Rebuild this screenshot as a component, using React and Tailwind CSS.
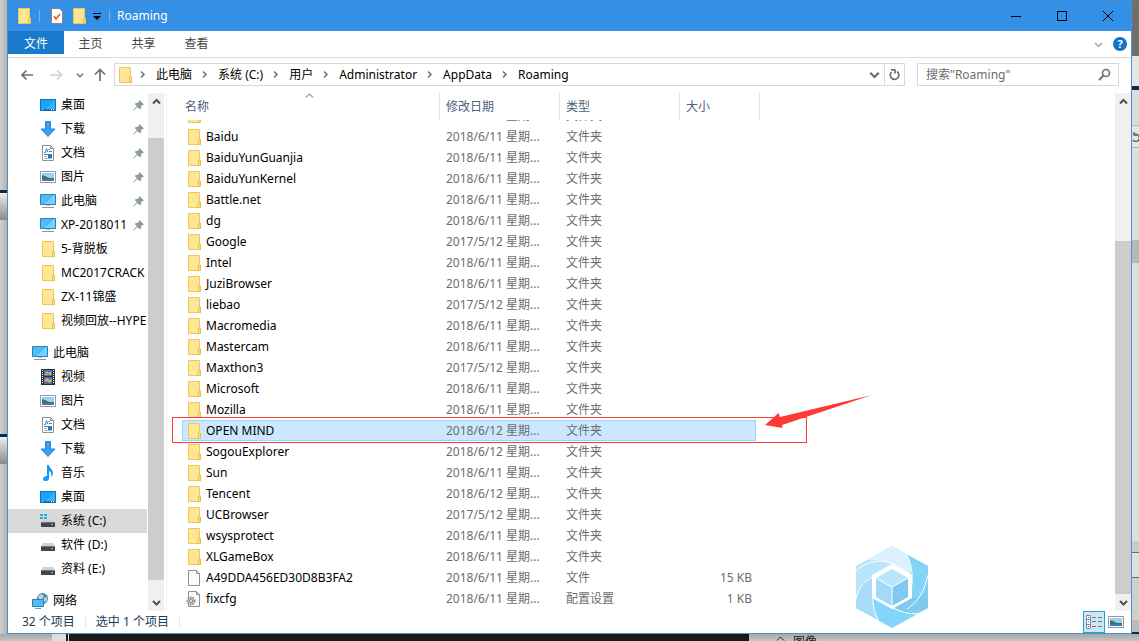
import React from "react";

const files = [
  ["Baidu", "2018/6/11"],
  ["BaiduYunGuanjia", "2018/6/11"],
  ["BaiduYunKernel", "2018/6/11"],
  ["Battle.net", "2018/6/11"],
  ["dg", "2018/6/11"],
  ["Google", "2017/5/12"],
  ["Intel", "2018/6/11"],
  ["JuziBrowser", "2018/6/11"],
  ["liebao", "2017/5/12"],
  ["Macromedia", "2018/6/11"],
  ["Mastercam", "2018/6/11"],
  ["Maxthon3", "2017/5/12"],
  ["Microsoft", "2018/6/11"],
  ["Mozilla", "2018/6/11"],
  ["OPEN MIND", "2018/6/12"],
  ["SogouExplorer", "2018/6/12"],
  ["Sun", "2018/6/11"],
  ["Tencent", "2018/6/12"],
  ["UCBrowser", "2017/5/12"],
  ["wsysprotect", "2018/6/11"],
  ["XLGameBox", "2018/6/11"],
  ["A49DDA456ED30D8B3FA2", "2018/6/11", "文件", "15 KB"],
  ["fixcfg", "2018/6/11", "配置设置", "1 KB"],
];

const quickAccess = [
  ["desktop", "桌面", true],
  ["download", "下载", true],
  ["document", "文档", true],
  ["picture", "图片", true],
  ["computer", "此电脑", true],
  ["computer", "XP-2018011", true],
  ["folder", "5-背脱板"],
  ["folder", "MC2017CRACK"],
  ["folder", "ZX-11锦盛"],
  ["folder", "视频回放--HYPE"],
];

const thisPc = [
  ["video", "视频"],
  ["picture", "图片"],
  ["document", "文档"],
  ["download", "下载"],
  ["music", "音乐"],
  ["desktop", "桌面"],
  ["system", "系统 (C:)"],
  ["drive", "软件 (D:)"],
  ["drive", "资料 (E:)"],
];

function Icon({ kind }) {
  return (
    <svg width="16" height="16" viewBox="0 0 16 16" className="shrink-0" aria-hidden="true">
      {kind === "folder" && (
        <>
          <path d="M2.5 .5h11v9.5l1 1v4.5h-12z" fill="#ffe694" stroke="#edc956" />
          <path d="M12.5 15.500v-5.500h2v5.500z" fill="#ffe08a" stroke="#e8bf48" />
        </>
      )}
      {kind === "desktop" && (
        <>
          <path d="M0 2h16v12H0z" fill="#0c75bd" />
          <path d="M1 3h14v9H1z" fill="#1ea3fb" />
          <path d="M6 12 15 3v9z" fill="#3bb2ff" />
          <path d="M2 12.500h1M11 12.500h1M13 12.500h1" stroke="#fff" />
        </>
      )}
      {kind === "download" && <path d="M5.500 .5h5v7.500h4.500L8 15.500 1 8h4.500z" fill="#3f9bec" stroke="#2b82d0" />}
      {kind === "document" && (
        <>
          <path d="M2.500 .5h8l3 3v12h-11z" fill="#fff" stroke="#909090" />
          <path d="M10.500 .5v3h3" fill="none" stroke="#909090" />
          <path d="M4 7.500h1.500L6.500 3.500 8 7.500M8.500 4.500h1.500M9 6.500h3M4 9.500h8" fill="none" stroke="#2589d6" />
          <path d="M4 11.500h3M4 13.500h8" stroke="#8ab8dd" />
          <path d="M8 10h4v3H8z" fill="#39759e" />
        </>
      )}
      {kind === "picture" && (
        <>
          <path d="M.5 2.500h15v11H.5z" fill="#fff" stroke="#989898" />
          <path d="M2 4h12v8H2z" fill="#9fcdf0" />
          <path d="M2 6l3 1 4 2h5v3H2z" fill="#3d7568" />
          <path d="M2 10h12v2H2z" fill="#3e7caf" />
        </>
      )}
      {kind === "computer" && (
        <>
          <path d="M.5 1.500h15v10H.5z" fill="#4bbcff" stroke="#347ca8" />
          <path d="M5 11 14 2h1v9z" fill="#79cfff" />
          <path d="M6 12.500h4" stroke="#bac8d3" />
          <path d="M2 14.500h12" stroke="#8398ac" />
        </>
      )}
      {kind === "video" && (
        <>
          <path d="M1 0h14v16H1z" fill="#333" />
          <path d="M4 1h8v6H4zM4 8h8v7H4z" fill="#3479d0" />
          <path d="M5 5l2-3 2 2 2-2v4H5zM4 12l3-3 2 2 3-1v2l-3 2z" fill="#efb437" />
          <path d="M7 4l2 1-1 2zM6 12l3 1-2 2z" fill="#c7432c" />
          <path d="M2.500 1v14M13.500 1v14" stroke="#fff" strokeDasharray="1 1" />
        </>
      )}
      {kind === "music" && (
        <path d="M7 0h2c0 3 4 4 4 8 0 2-1 3-2 4 1-4 0-5-2-6v7c0 4-6 4-6 1 0-2 2-3 4-3z" fill="#109bf4" />
      )}
      {(kind === "system" || kind === "drive") && (
        <>
          <path d="M3 6h10l2 4H1z" fill="#d0d1d4" />
          <path d="M1 9h14v5H1z" fill="#45464b" />
          <path d="M1 9.500h14" stroke="#777" />
          <path d="M11 11.500h2" stroke="#4df07a" />
        </>
      )}
      {kind === "system" && (
        <>
          <path d="M0 0h7v7H0z" fill="#d9d9d9" />
          <path d="M0 1h3v2H0zM4 1h3v2H4zM0 4h3v2H0zM4 4h3v2H4z" fill="#17b5f2" />
        </>
      )}
      {kind === "network" && (
        <>
          <circle cx="10.500" cy="5.500" r="5.500" fill="#4e87ab" />
          <path d="M6 3l3-2 3 2-2 4-3-1zM12 5l3-1v4l-3 1z" fill="#b5d5df" />
          <path d="M.5 6.500h11v7H.5z" fill="#4bbcff" stroke="#347ca8" />
          <path d="M3 15.500h6" stroke="#8398ac" />
        </>
      )}
      {(kind === "file" || kind === "config") && (
        <>
          <path d="M2.500 .5h8l3 3v12h-11z" fill="#fafafa" stroke="#909090" />
          <path d="M10.500 .5v3h3" fill="none" stroke="#909090" />
        </>
      )}
      {kind === "config" && (
        <>
          <circle cx="5" cy="10" r="3.500" fill="#c9ced3" stroke="#858b91" strokeWidth="2" strokeDasharray="1.500 1" />
          <circle cx="5" cy="10" r="1.500" fill="#fff" stroke="#858b91" />
        </>
      )}
    </svg>
  );
}

function Chevron({ dir = "down", className = "", size = 9, width = 1.5 }) {
  const paths = {
    down: "M1 3l3.500 3.500L8 3",
    up: "M1 6.500 4.500 3 8 6.500",
    right: "M3 1.500 6 4.500 3 7.500",
  };
  return (
    <svg width={size} height={size} viewBox="0 0 9 9" className={`shrink-0 ${className}`} aria-hidden="true">
      <path d={paths[dir]} fill="none" stroke="currentColor" strokeWidth={width} />
    </svg>
  );
}

function Pin() {
  return (
    <svg width="11" height="11" viewBox="0 0 11 11" className="shrink-0" aria-hidden="true">
      <path d="M6.500 0 11 4.500 9.500 5 8 6.500v2.500L6.500 9 4.500 7 .5 10.800 0 10.500 3.800 6.300 2 4.500 2.500 3h2L6 1.500z" fill="#8c9ba5" />
    </svg>
  );
}

function NavItem({ item, root }) {
  const [kind, label, pinned] = item;
  return (
    <li>
      <a
        href="#"
        className={`flex h-6 items-center gap-[5px] overflow-hidden whitespace-nowrap ${root ? "pl-6" : "pl-8"} ${kind === "system" ? "bg-[#d9d9d9]" : ""}`}
      >
        <Icon kind={kind} />
        <span className="flex-1">{label}</span>
        {pinned && <span className="pr-[3px]"><Pin /></span>}
      </a>
    </li>
  );
}

function FileRow({ row, selected }) {
  const [name, date, type = "文件夹", size = ""] = row;
  const kind = type === "文件夹" ? "folder" : type === "文件" ? "file" : "config";
  const tone = selected ? "border-[#99d1ff] bg-[#cce8ff]" : "border-transparent";
  return (
    <tr className="h-[21px] text-[#6d6d6d]">
      <td className="relative p-0">
        <div className={`flex h-[21px] items-center gap-1 border-y border-l pl-[3px] text-black ${tone}`}>
          <Icon kind={kind} />
          {name}
        </div>
        {selected && (
          <>
            <span className="absolute -left-[10px] -top-[3px] h-[26px] w-[635px] border border-[#ff3838]" />
            <svg width="108" height="34" viewBox="0 0 108 34" className="absolute -top-[25px] left-[583px]" aria-hidden="true">
              <path d="M0 30 13.500 18 15 22 107 0 17 30 17.500 33z" fill="#ff3838" />
            </svg>
          </>
        )}
      </td>
      <td className="p-0"><div className={`h-[21px] border-y pl-[6px] leading-[19px] ${tone}`}>{date} 星期...</div></td>
      <td className="p-0"><div className={`h-[21px] border-y pl-[6px] leading-[19px] ${tone}`}>{type}</div></td>
      <td className="p-0 pr-1"><div className={`h-[21px] border-y border-r pr-[3px] text-right leading-[19px] ${tone}`}>{size}</div></td>
    </tr>
  );
}

function ScrollBar({ before, thumb }) {
  return (
    <div className="flex w-4 shrink-0 flex-col items-center bg-[#f0f0f0] text-[#505050]">
      <button aria-label="向上滚动" className="flex h-[17px] items-center"><Chevron dir="up" width={2} /></button>
      <div className={before} />
      <div className={`w-full bg-[#cdcdcd] ${thumb}`} />
      <button aria-label="向下滚动" className="flex h-[17px] items-center"><Chevron width={2} /></button>
    </div>
  );
}

const crumbs = ["此电脑", "系统 (C:)", "用户", "Administrator", "AppData", "Roaming"];

export default function App() {
  return (
    <div className="flex min-h-screen flex-col bg-[#bdbdbd] font-['Noto_Sans','Noto_Sans_CJK_SC',sans-serif] text-[12px] leading-4 text-black">
      <div className="flex flex-1">
        <div className="flex w-[7px] shrink-0 flex-col">
          <div className="h-[190px] bg-linear-to-r from-[#d0d0d0] to-[#b4b4b4]" />
          <div className="h-[3px] bg-[#0b2c47]" />
          <div className="h-[27px] bg-linear-to-b from-[#eee] to-[#8a8a8a]" />
          <div className="h-[214px] bg-linear-to-r from-[#d0d0d0] to-[#b4b4b4]" />
          <div className="h-[3px] bg-[#0b2c47]" />
          <div className="h-[27px] bg-linear-to-b from-[#eee] to-[#8a8a8a]" />
          <div className="flex-1 bg-linear-to-r from-[#d0d0d0] to-[#b4b4b4]" />
        </div>

        <main className="relative flex min-w-0 flex-1 flex-col border border-[#4a90d4] bg-white">
          <header className="flex h-[30px] items-center bg-[#3390e6] pl-2">
            <Icon kind="folder" />
            <span className="ml-[7px] h-3 w-px bg-[#8fa9c4]" />
            <button aria-label="属性" className="ml-[9px]">
              <svg width="16" height="16" viewBox="0 0 16 16" aria-hidden="true">
                <path d="M2.500 .5h8l3 3v12h-11z" fill="#fff" stroke="#858585" />
                <path d="M5 8l2 3 4-5" fill="none" stroke="#e4572a" strokeWidth="1.500" />
              </svg>
            </button>
            <button aria-label="新建文件夹" className="ml-[6px]"><Icon kind="folder" /></button>
            <button aria-label="自定义快速访问工具栏" className="ml-[6px]">
              <svg width="8" height="8" viewBox="0 0 8 8" aria-hidden="true"><path d="M0 1.500h8" stroke="#000" /><path d="M0 4h8L4 8z" /></svg>
            </button>
            <span className="ml-2 h-3 w-px bg-[#8fa9c4]" />
            <h1 className="ml-[7px] flex-1 text-white">Roaming</h1>
            <button aria-label="最小化" className="flex w-[46px] justify-center">
              <svg width="10" height="10" viewBox="0 0 10 10"><path d="M0 5.500h10" stroke="#000" /></svg>
            </button>
            <button aria-label="最大化" className="flex w-[46px] justify-center">
              <svg width="10" height="10" viewBox="0 0 10 10"><path d="M.5 .5h9v9h-9z" fill="none" stroke="#000" /></svg>
            </button>
            <button aria-label="关闭" className="flex w-[46px] justify-center">
              <svg width="10" height="10" viewBox="0 0 10 10"><path d="M0 0l10 10M10 0 0 10" stroke="#000" /></svg>
            </button>
          </header>

          <nav aria-label="功能区" className="flex h-[27px] items-start border-b border-[#dadbdc] text-[#444]">
            <button className="h-[23px] w-14 bg-[#1979ca] pt-[2px] text-white">文件</button>
            <button className="h-[23px] w-[53px] pt-[2px]">主页</button>
            <button className="h-[23px] w-[53px] pt-[2px]">共享</button>
            <button className="h-[23px] w-[53px] pt-[2px]">查看</button>
            <span className="flex-1" />
            <button aria-label="展开功能区" className="flex h-[26px] items-center text-[#999]"><Chevron width={1.2} /></button>
            <button aria-label="帮助" className="mr-1 mt-[6px] ml-[10px] flex size-[14px] items-center justify-center rounded-full bg-[#0f74cd] text-[11px] font-bold leading-[14px] text-white">?</button>
          </nav>

          <div className="flex h-[35px] items-center px-3 pb-[2px] text-[#6e6e6e]">
            <button aria-label="后退">
              <svg width="14" height="12" viewBox="0 0 14 12"><path d="M13 6H2M6.500 1.500 2 6l4.500 4.500" fill="none" stroke="currentColor" strokeWidth="1.700" /></svg>
            </button>
            <button aria-label="前进" className="ml-4 text-[#d2d2d2]">
              <svg width="14" height="12" viewBox="0 0 14 12"><path d="M0 6h11M7 1.500 11.500 6 7 10.500" fill="none" stroke="currentColor" strokeWidth="1.700" /></svg>
            </button>
            <button aria-label="最近位置" className="ml-3"><Chevron size={8} /></button>
            <button aria-label="上移" className="ml-[10px]">
              <svg width="12" height="13" viewBox="0 0 12 13"><path d="M6 13V2M1 6.500 6 1.500l5 5" fill="none" stroke="currentColor" strokeWidth="1.700" /></svg>
            </button>
            <div className="ml-2 flex h-[23px] flex-1 items-center border border-[#d9d9d9] pl-[2px]">
              <Icon kind="folder" />
              {crumbs.map((c, i) => (
                <React.Fragment key={c}>
                  <Chevron dir="right" className={i === 0 ? "ml-[5px] mr-[9px]" : "ml-2 mr-[9px]"} />
                  <a href="#" className="whitespace-nowrap text-black">{c}</a>
                </React.Fragment>
              ))}
              <span className="flex-1" />
              <button aria-label="以前的位置" className="mr-1"><Chevron size={11} width={1.8} /></button>
              <button aria-label="刷新" className="flex h-full w-5 items-center justify-center border-l border-[#d9d9d9]">
                <svg width="11" height="12" viewBox="0 0 11 12"><path d="M8 2.500A4.300 4.300 0 1 1 2.500 3M2 .8h4.500M6 .5v4" fill="none" stroke="currentColor" strokeWidth="1.700" /></svg>
              </button>
            </div>
            <label className="ml-3 flex h-[23px] w-[202px] items-center border border-[#d9d9d9] pl-2 pr-[7px]">
              <input aria-label="搜索" placeholder={'搜索"Roaming"'} className="min-w-0 flex-1 bg-transparent outline-none placeholder:text-[#6d6d6d]" />
              <svg width="13" height="13" viewBox="0 0 13 13" aria-hidden="true"><circle cx="8" cy="5" r="3.500" fill="none" stroke="currentColor" strokeWidth="1.600" /><path d="M5.500 7.500 1 12" stroke="currentColor" strokeWidth="1.800" /></svg>
            </label>
          </div>

          <div className="flex flex-1">
            <nav aria-label="导航窗格" className="mr-px h-[517px] w-[139px] shrink-0 overflow-hidden">
              <ul>{quickAccess.map((i) => <NavItem key={i[1]} item={i} />)}</ul>
              <ul className="mt-2">
                <NavItem root item={["computer", "此电脑"]} />
                {thisPc.map((i) => <NavItem key={i[1]} item={i} />)}
              </ul>
              <ul className="mt-2"><NavItem root item={["network", "网络"]} /></ul>
            </nav>
            <ScrollBar before="h-7" thumb="flex-1 mb-[14px]" />
            <section className="ml-[2px] flex min-w-0 flex-1 border-l border-[#f3f3f3] pl-[15px]">
              <table className="w-[578px] shrink-0 table-fixed border-separate border-spacing-0 self-start">
                <thead>
                  <tr className="h-[27px] text-left text-[#4c607a]">
                    <th className="relative w-[258px] border-r border-[#e5e5e5] p-0 pl-[3px] font-normal">
                      名称
                      <Chevron dir="up" width={1} className="absolute -top-[2px] left-[123px] text-[#555]" />
                    </th>
                    <th className="w-[120px] border-r border-[#e5e5e5] p-0 pl-[6px] font-normal">修改日期</th>
                    <th className="w-[120px] border-r border-[#e5e5e5] p-0 pl-[6px] font-normal">类型</th>
                    <th className="w-[80px] border-r border-[#e5e5e5] p-0 pl-[6px] font-normal">大小</th>
                  </tr>
                </thead>
                <tbody>
                  <tr className="text-[#6d6d6d]">
                    <td className="p-0 pl-1"><div className="flex h-[6px] items-end overflow-hidden pb-[3px]"><Icon kind="folder" /></div></td>
                    <td className="p-0 pl-[6px]"><div className="flex h-[6px] items-end overflow-hidden pb-[2px]">2018/6/11 星期...</div></td>
                    <td className="p-0 pl-[6px]"><div className="flex h-[6px] items-end overflow-hidden pb-[2px]">文件夹</div></td>
                    <td className="p-0" />
                  </tr>
                  {files.map((f) => <FileRow key={f[0]} row={f} selected={f[0] === "OPEN MIND"} />)}
                </tbody>
              </table>
            </section>
            <ScrollBar before="h-[131px]" thumb="flex-1" />
          </div>

          <footer className="flex h-[22px] items-center pl-[14px] pr-[7px] text-[#1e395b]">
            <span>32 个项目</span>
            <span className="mx-[10px] h-3 w-px bg-[#e8e8e8]" />
            <span>选中 1 个项目</span>
            <span className="mx-[10px] h-3 w-px bg-[#e8e8e8]" />
            <span className="flex-1" />
            <button aria-label="详细信息" className="flex h-[22px] w-[22px] items-center justify-center border border-[#26a0da] bg-[#cbe8f6]">
              <svg width="16" height="14" viewBox="0 0 16 14"><path d="M.5 .5h4v13h-4zM.5 4.500h4M.5 9.500h4" fill="#fff" stroke="#888" /><path d="M6 2.500h4M12 2.500h4M6 6.500h4M12 6.500h4M6 11.500h4M12 11.500h4" stroke="#6b7880" /><path d="M2 2h1v1H2zM2 6.500h1v1H2z" fill="#2d7dc0" /><path d="M2 11h1v1H2z" fill="#c0392b" /></svg>
            </button>
            <button aria-label="大图标" className="ml-[3px]"><Icon kind="picture" /></button>
          </footer>

          <svg width="74" height="84" viewBox="0 0 74 84" className="absolute bottom-[4px] right-[202px]" aria-hidden="true">
            <path d="M37 1 73 21V63L37 83 1 63V21z" fill="#b9e5fb" />
            <path d="M37 1 12 15C28 14 42 20 56 31 58 22 56 14 51 9z" fill="#dbf1fd" />
            <path d="M51 9 73 21V43C69 55 62 61 55 63V31C57 22 55 15 51 9z" fill="#86d3f8" />
            <path d="M73 43V63C58 72 43 67 36 61L55 52C63 55 70 50 73 43z" fill="#80caf0" />
            <path d="M73 63 37 83 23 75C18 67 17 58 18 52L37 63C50 70 62 69 73 63z" fill="#82d5fb" />
            <path d="M1 52C4 40 9 36 17 32V52C17 60 19 68 23 75L1 63z" fill="#a7ddf8" />
            <path d="M1 26C20 9 40 16 56 31M51 9c8 12 7 30 4 41M73 30C68 50 62 57 52 64M73 67C58 71 48 68 36 62M23 75c-6-11-6-28-5-42M1 54C4 42 9 36 18 32" fill="none" stroke="#fff" />
            <path d="M37 19 57 30V53L37 64 17 53V30z" fill="#fff" />
            <path d="M37 24 53 33 37 42 21 33z" fill="#b9e5fb" />
            <path d="M21 33 37 42V61L21 52z" fill="#a2d9f6" />
            <path d="M53 33 37 42V61L53 52z" fill="#80caf0" />
            <path d="M21 33 37 42 53 33M37 42V61" fill="none" stroke="#fff" />
          </svg>
        </main>

        <div className="flex w-[7px] shrink-0 flex-col">
          <div className="h-14 bg-[#6f6f6f]" />
          <div className="h-[30px] bg-[#e6e6e6]" />
          <div className="h-1 bg-[#0b2c47]" />
          <div className="h-[35px] bg-[#dcdcdc]" />
          <div className="flex h-[23px] items-center overflow-hidden border-y border-[#b5b5b5] bg-[#e4e4e4] text-[#666]">
            <svg width="7" height="11" viewBox="0 0 7 11" aria-hidden="true"><path d="M2 1v3h3M2 4a3.500 3.500 0 1 1-1 5" fill="none" stroke="currentColor" strokeWidth="1.500" /></svg>
          </div>
          <div className="h-[92px] bg-[#dedede]" />
          <div className="h-[23px] bg-[#b8b8b8]" />
          <div className="h-[278px] bg-[#dedede]" />
          <div className="h-[11px] bg-[#cacaca]" />
          <div className="h-[26px] border-y border-[#6d6d6d] bg-[#e0e0e0]" />
          <div className="flex-1 bg-[#cfcfcf]" />
          <div className="h-[12px] bg-[#bcbcbc]" />
          <div className="h-[2px] bg-[#0b2c47]" />
        </div>
      </div>
      <div className="flex h-[7px] overflow-hidden">
        <div className="w-[52px] bg-linear-to-b from-[#a8a8a8] to-[#c4c4c4]" />
        <div className="w-[14px] bg-[#dedede]" />
        <div className="w-[5px] border-x-2 border-[#1a1a1a] bg-[#dedede]" />
        <div className="flex-1 bg-[#1a1a1a]" />
        <div className="flex w-[390px] items-start gap-2 bg-linear-to-b from-[#a8a8a8] to-[#c4c4c4] pl-[27px] text-[#222]">
          <Chevron dir="up" width={1} />
          <span>图像</span>
        </div>
      </div>
    </div>
  );
}
